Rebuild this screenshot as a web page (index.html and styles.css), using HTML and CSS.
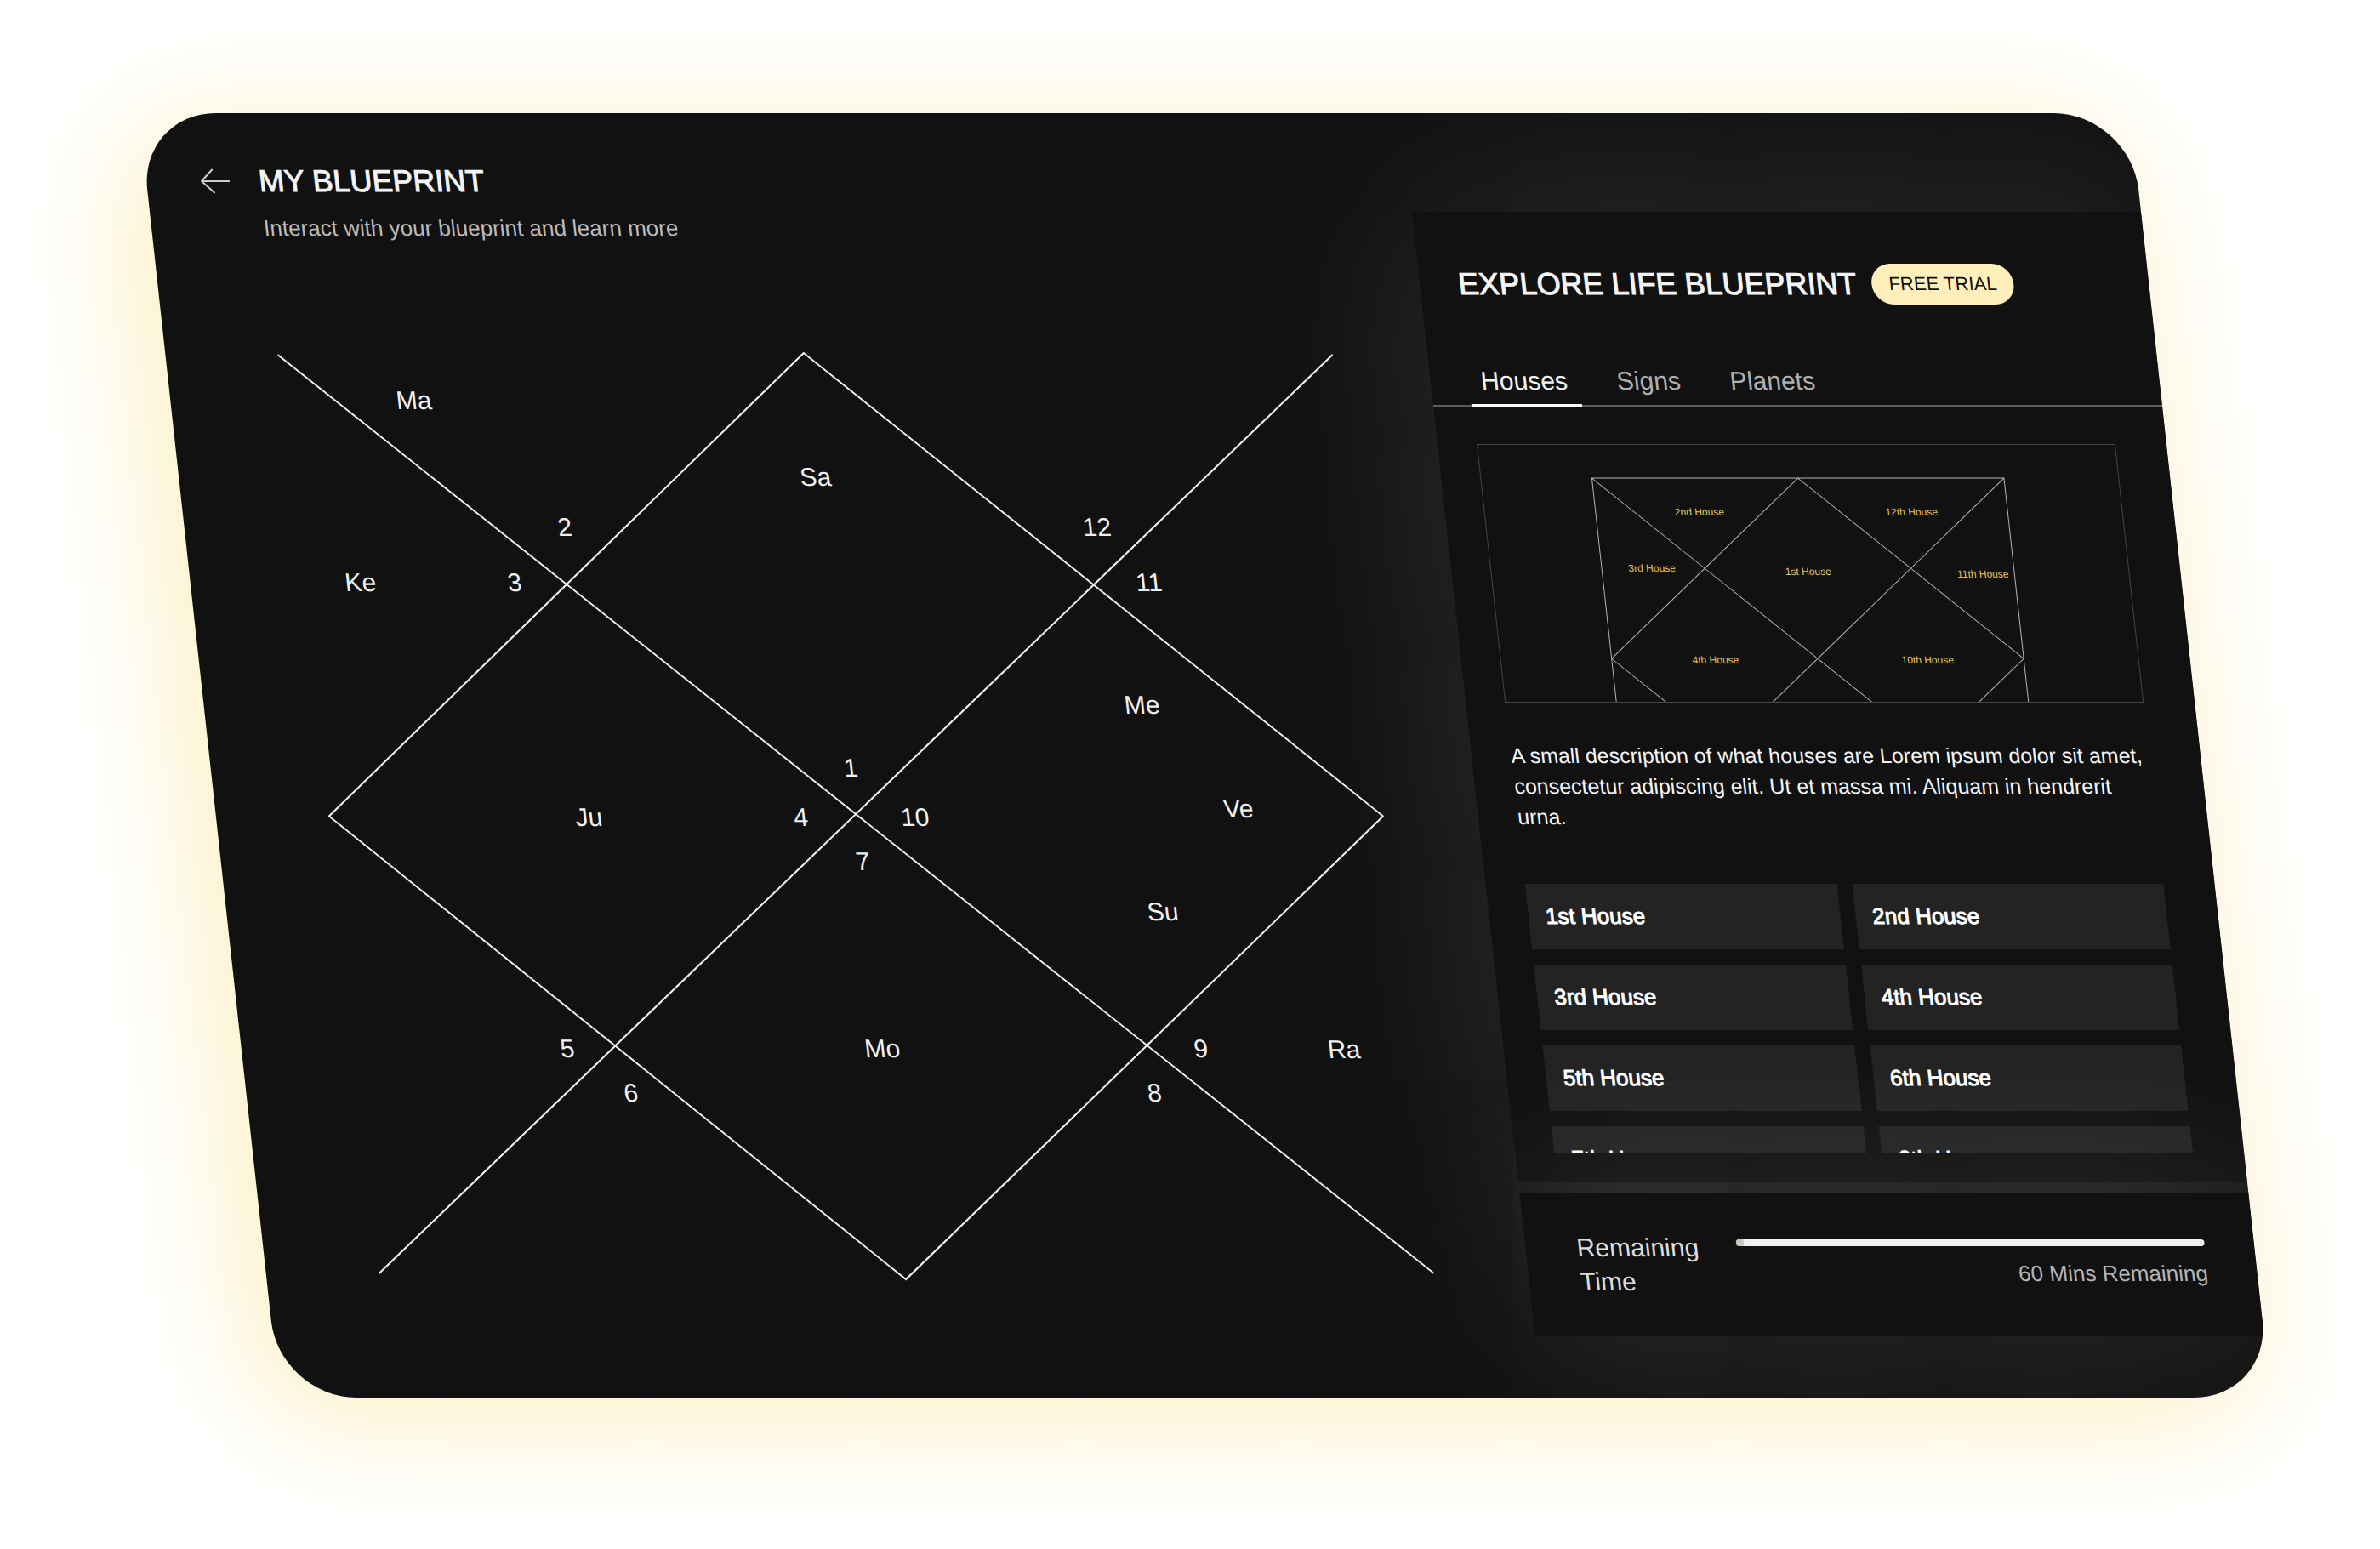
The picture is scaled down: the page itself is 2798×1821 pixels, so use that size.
FILE: index.html
```html
<!DOCTYPE html>
<html lang="en">
<head>
	<meta charset="utf-8">
	<title>My Blueprint</title>
	<link rel="stylesheet" href="styles.css">
</head>
<body>
	<div class="card">
		<main class="blueprint">
			<header class="blueprint-header">
				<a class="back" href="#" aria-label="Back">
					<svg viewBox="0 0 34 30" width="34" height="30">
						<path d="M34 15H1M15 1L1 15l14 14" />
					</svg>
				</a>
				<h1>MY BLUEPRINT</h1>
				<p>Interact with your blueprint and learn more</p>
			</header>

			<svg class="chart" viewBox="0 0 1240 1091">
				<!-- diagonals -->
				<path d="M0 3L1240 1082M1239 3L1 1082" />
				<!-- diamond -->
				<path d="M618 1L1239 545L619 1089L1 545Z" />

				<!-- planets -->
				<text x="154" y="67">Ma</text>
				<text x="616" y="157">Sa</text>
				<text x="68" y="281">Ke</text>
				<text x="970" y="425">Me</text>
				<text x="1070" y="546">Ve</text>
				<text x="306" y="556">Ju</text>
				<text x="968" y="667">Su</text>
				<text x="621" y="828">Mo</text>
				<text x="1163" y="829">Ra</text>

				<!-- signs -->
				<text x="620" y="499">1</text>
				<text x="315" y="216">2</text>
				<text x="249" y="281">3</text>
				<text x="555" y="556">4</text>
				<text x="251" y="828">5</text>
				<text x="320" y="880">6</text>
				<text x="622" y="608">7</text>
				<text x="935" y="880">8</text>
				<text x="995" y="828">9</text>
				<text x="689" y="556">10</text>
				<text x="994" y="281">11</text>
				<text x="940" y="216">12</text>
			</svg>
		</main>

		<aside class="sidebar">
			<section class="explore">
				<div class="explore-header">
					<h2>EXPLORE LIFE BLUEPRINT</h2>
					<span class="badge">FREE TRIAL</span>
				</div>

				<nav class="tabs">
					<button class="tab active" type="button">Houses</button>
					<button class="tab" type="button">Signs</button>
					<button class="tab" type="button">Planets</button>
				</nav>

				<div class="explore-body">
					<div class="preview">
						<svg viewBox="0 0 748 302">
							<path d="M130 39H614V463H130ZM130 39L614 463M614 39L130 463M372 39L614 251L372 463L130 251Z" />
							<text x="252" y="83">2nd House</text>
							<text x="501" y="83">12th House</text>
							<text x="189" y="149">3rd House</text>
							<text x="372" y="153">1st House</text>
							<text x="577" y="156">11th House</text>
							<text x="252" y="257">4th House</text>
							<text x="501" y="257">10th House</text>
						</svg>
					</div>

					<p class="description">A small description of what houses are Lorem ipsum dolor sit amet, consectetur adipiscing elit. Ut et massa mi. Aliquam in hendrerit urna.</p>

					<div class="houses">
						<button type="button">1st House</button>
						<button type="button">2nd House</button>
						<button type="button">3rd House</button>
						<button type="button">4th House</button>
						<button type="button">5th House</button>
						<button type="button">6th House</button>
						<button type="button">7th House</button>
						<button type="button">8th House</button>
					</div>
				</div>
			</section>

			<section class="remaining">
				<label for="time">Remaining Time</label>
				<div class="remaining-bar">
					<progress id="time" value="1" max="60"></progress>
					<span>60 Mins Remaining</span>
				</div>
			</section>
		</aside>
	</div>
</body>
</html>
```

FILE: styles.css
```css
* {
	box-sizing: border-box;
}

body {
	margin: 0;
	padding: 133px 211px 178px 246px;
	background-color: #fff;
	font-family: "Liberation Sans", Arial, sans-serif;
	color: #f5f5f5;
}

h1, h2, p {
	margin: 0;
}

h1, h2 {
	font-size: 36px;
	font-weight: 400;
	line-height: 44px;
	-webkit-text-stroke: 1px;
}

button {
	border: none;
	background: none;
	font-family: inherit;
	text-align: left;
	cursor: pointer;
}

.card {
	display: flex;
	overflow: hidden;
	border-radius: 90px;
	background-color: #111;
	box-shadow: -20px 20px 140px #fbeebc;
	transform: skewX(6.25deg);
}

/* Left side */
.blueprint {
	flex: 1;
	padding: 58px 111px 137px 64px;
}

.blueprint-header {
	display: grid;
	grid-template-columns: 34px 1fr;
	column-gap: 34px;
	row-gap: 17px;
	align-items: center;
	margin-bottom: 130px;
}

.blueprint-header p {
	grid-column: 2;
	font-size: 26px;
	line-height: 32px;
	color: #bbb;
}

.back svg {
	display: block;
	fill: none;
	stroke: #ccc;
	stroke-width: 2;
}

.chart {
	display: block;
	margin-left: 68px;
	fill: none;
	stroke: #f0f0f0;
	stroke-width: 2;
}

.chart text {
	fill: #f0f0f0;
	stroke: none;
	font-size: 30px;
	text-anchor: middle;
}

/* Right side */
.sidebar {
	display: flex;
	flex-direction: column;
	gap: 14px;
	width: 36.6%;
	padding: 116px 0 71px;
}

.explore {
	padding: 61px 0 34px;
	background-color: #111;
	box-shadow: 0 0 220px rgba(255, 255, 255, 0.15);
}

.explore-header {
	display: flex;
	align-items: center;
	gap: 18px;
	padding: 0 45px;
	margin-bottom: 70px;
}

.badge {
	padding: 0 20px;
	border-radius: 25px;
	background-color: #ffefba;
	color: #111;
	font-size: 22px;
	line-height: 48px;
}

.tabs {
	display: flex;
	gap: 30px;
	padding: 0 45px;
	box-shadow: inset 0 -2px #5c5c58;
}

.tab {
	padding: 0 14px 7px;
	border-bottom: 3px solid transparent;
	font-size: 30px;
	line-height: 40px;
	color: #b0b0b0;
}

.tab.active {
	border-color: #fff;
	color: #f5f5f5;
}

.explore-body {
	padding: 44px 60px 0 46px;
}

.preview {
	border: 1px solid #444;
	margin-bottom: 44px;
}

.preview svg {
	display: block;
	fill: none;
	stroke: #b5b5b0;
	stroke-width: 1;
}

.preview text {
	fill: #e3c45c;
	stroke: none;
	font-size: 12px;
	text-anchor: middle;
}

.description {
	margin-bottom: 61px;
	font-size: 25px;
	line-height: 36px;
}

.houses {
	display: grid;
	grid-template-columns: 1fr 1fr;
	grid-auto-rows: 77px;
	gap: 18px;
	height: 316px;
	overflow: hidden;
}

.houses button {
	padding: 0 20px;
	background-color: #232323;
	color: #fff;
	font-size: 26px;
	-webkit-text-stroke: 1px;
}

.remaining {
	display: flex;
	align-items: center;
	gap: 38px;
	height: 168px;
	padding: 0 58px 0 60px;
	background-color: #111;
	box-shadow: 0 0 220px rgba(255, 255, 240, 0.15);
}

.remaining label {
	width: 150px;
	font-size: 30px;
	line-height: 40px;
	color: #ddd;
}

.remaining-bar {
	display: flex;
	flex: 1;
	flex-direction: column;
	gap: 12px;
	font-size: 26px;
	line-height: 40px;
	text-align: right;
	color: #b5b5b5;
}

progress {
	width: 100%;
	height: 8px;
	appearance: none;
	border: none;
	border-radius: 4px;
	overflow: hidden;
}

progress::-webkit-progress-bar {
	background-color: #f0f0f0;
}

progress::-webkit-progress-value {
	background-color: #c9c8c0;
}
```
